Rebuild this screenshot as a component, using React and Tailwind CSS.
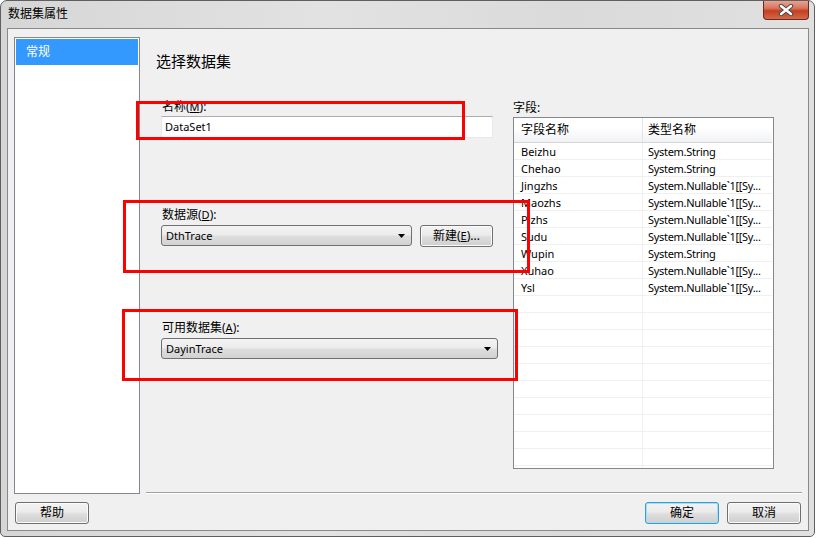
import React from "react";

const FONT = { fontFamily: '"Noto Sans", "Noto Sans CJK SC", sans-serif' };

function Arrow() {
  return (
    <svg width="7" height="4" viewBox="0 0 7 4" className="shrink-0">
      <path d="M0 0 H7 L3.5 4 Z" fill="#000" />
    </svg>
  );
}

function Combo({ className, text }) {
  return (
    <div
      className={`h-[21px] rounded-[3px] border border-[#707070] bg-[linear-gradient(#f3f3f3_0%,#ececec_45%,#dddddd_55%,#d2d2d2_100%)] flex items-center justify-between pl-[4px] pr-[6px] text-[11px] text-black ${className}`}
    >
      <span className="leading-none">{text}</span>
      <Arrow />
    </div>
  );
}

function Btn({ className, children, def }) {
  return (
    <div
      className={`h-[22px] rounded-[3px] border flex items-center justify-center text-[12px] text-black bg-[linear-gradient(#f3f3f3_0%,#ebebeb_45%,#dddddd_55%,#cfcfcf_100%)] ${
        def
          ? "border-[#3c9bd1] shadow-[inset_0_0_0_1px_#9fe0f7]"
          : "border-[#707070] shadow-[inset_0_0_0_1px_#fbfbfb]"
      } ${className}`}
    >
      {children}
    </div>
  );
}

const rows = [
  ["Beizhu", "System.String"],
  ["Chehao", "System.String"],
  ["Jingzhs", "System.Nullable`1[[Sy..."],
  ["Maozhs", "System.Nullable`1[[Sy..."],
  ["Pizhs", "System.Nullable`1[[Sy..."],
  ["Sudu", "System.Nullable`1[[Sy..."],
  ["Wupin", "System.String"],
  ["Xuhao", "System.Nullable`1[[Sy..."],
  ["Ysl", "System.Nullable`1[[Sy..."],
];

export default function App() {
  const empties = Array.from({ length: 10 });
  return (
    <div className="w-[816px] h-[538px] bg-white relative overflow-hidden" style={FONT}>
      {/* window */}
      <div className="w-[815px] h-[537px] rounded-t-[7px] rounded-b-[5px] border border-[#5f5f5f] bg-[linear-gradient(90deg,#d6d6d6_0%,#e2e2e2_40%,#dadada_70%,#e0e0e0_100%)] flex flex-col">
        {/* title bar */}
        <div className="h-[27px] flex items-start shrink-0">
          <div className="pl-[7px] pt-[5px] text-[12px] leading-[16px] text-black">数据集属性</div>
          <div className="ml-auto mr-[5px] w-[46px] h-[19px] rounded-b-[4px] border border-t-0 border-[#6b2a1e] bg-[linear-gradient(#e7a393_0%,#d9745c_40%,#c4401f_55%,#d5684c_100%)] flex items-center justify-center">
            <svg width="16" height="12" viewBox="0 0 16 12">
              <path d="M3 2 L13 10 M13 2 L3 10" stroke="#4a4a4a" strokeWidth="4.4" strokeLinecap="round" />
              <path d="M3 2 L13 10 M13 2 L3 10" stroke="#ffffff" strokeWidth="2.4" strokeLinecap="round" />
            </svg>
          </div>
        </div>
        {/* client */}
        <div className="ml-[6px] mr-[5px] h-[503px] border border-[#8a8a8a] bg-[#f0f0f0] flex flex-col">
          <div className="flex pl-[6px] pt-[8px]">
            {/* nav */}
            <div className="w-[126px] h-[457px] border border-[#828790] bg-white p-[1px] shrink-0">
              <div className="h-[26px] bg-[#3399ff] text-white text-[12px] flex items-center pl-[10px]">常规</div>
            </div>
            {/* content */}
            <div className="ml-[6px] w-[656px] h-[456px] border-b border-[#a0a0a0] shadow-[0_1px_0_#ffffff]">
              <div className="pl-[10px] mt-[14px] h-[20px] text-[15px] leading-[20px] text-black">选择数据集</div>
              <div className="flex mt-[29px]">
                {/* left form column */}
                <div className="pl-[15px] w-[352px]">
                  <div className="h-[14px] text-[12px] leading-[14px] pl-[1px]">
                    名称(<span className="underline text-[11px]">M</span>):
                  </div>
                  <div className="mt-[2px] w-[332px] h-[22px] bg-white border border-[#e3e9ef] border-t-[#abadb3] flex items-center pl-[3px] text-[11px]">
                    DataSet1
                  </div>
                  <div className="mt-[70px] h-[14px] text-[12px] leading-[14px] pl-[1px]">
                    数据源(<span className="underline text-[11px]">D</span>):
                  </div>
                  <div className="mt-[3px] flex gap-[8px]">
                    <Combo className="w-[251px]" text="DthTrace" />
                    <Btn className="w-[73px] h-[21px]">
                      新建(<span className="underline text-[11px]">E</span>)...
                    </Btn>
                  </div>
                  <div className="mt-[74px] h-[14px] text-[12px] leading-[14px] pl-[1px]">
                    可用数据集(<span className="underline text-[11px]">A</span>):
                  </div>
                  <div className="mt-[3px]">
                    <Combo className="w-[337px]" text="DayinTrace" />
                  </div>
                </div>
                {/* right table column */}
                <div className="ml-[15px] w-[261px]">
                  <div className="h-[15px] text-[12px] leading-[14px] mt-[1px]">字段:</div>
                  <div className="mt-[1px] h-[352px] border border-[#828790] bg-white overflow-hidden">
                    <div className="flex h-[25px] bg-[linear-gradient(#ffffff_0%,#ffffff_40%,#f1f2f4_100%)] border-b border-[#d5d5d5] text-[12px] mr-[1px]">
                      <div className="w-[129px] pl-[7px] flex items-center border-r border-[#e3e3e3]">字段名称</div>
                      <div className="flex-1 pl-[5px] flex items-center">类型名称</div>
                    </div>
                    <div className="relative mr-[1px]">
                      <div className="absolute left-[128px] top-0 w-px h-[330px] bg-[#f0f0f0]" />
                      {rows.map(([a, b]) => (
                        <div key={a} className="flex h-[17px] border-b border-[#f0f0f0] text-[11px] leading-[17px]">
                          <div className="w-[129px] pl-[7px] whitespace-nowrap overflow-hidden">{a}</div>
                          <div className="flex-1 pl-[5px] whitespace-nowrap overflow-hidden tracking-[-0.3px]">{b}</div>
                        </div>
                      ))}
                      {empties.map((_, i) => (
                        <div key={i} className="h-[17px] border-b border-[#f0f0f0]" />
                      ))}
                    </div>
                  </div>
                </div>
              </div>
            </div>
          </div>
          {/* bottom buttons */}
          <div className="flex pl-[7px] pr-[7px] mt-[8px]">
            <Btn className="w-[74px]">帮助</Btn>
            <div className="ml-auto flex gap-[8px]">
              <Btn className="w-[74px]" def>确定</Btn>
              <Btn className="w-[74px]">取消</Btn>
            </div>
          </div>
        </div>
      </div>

      {/* red annotation boxes */}
      <div className="absolute left-[136px] top-[101px] w-[329px] h-[39px] border-[3px] border-[#ff0000]" />
      <div className="absolute left-[123px] top-[200px] w-[407px] h-[73px] border-[3px] border-[#ff0000]" />
      <div className="absolute left-[122px] top-[309px] w-[396px] h-[72px] border-[3px] border-[#ff0000]" />
    </div>
  );
}
